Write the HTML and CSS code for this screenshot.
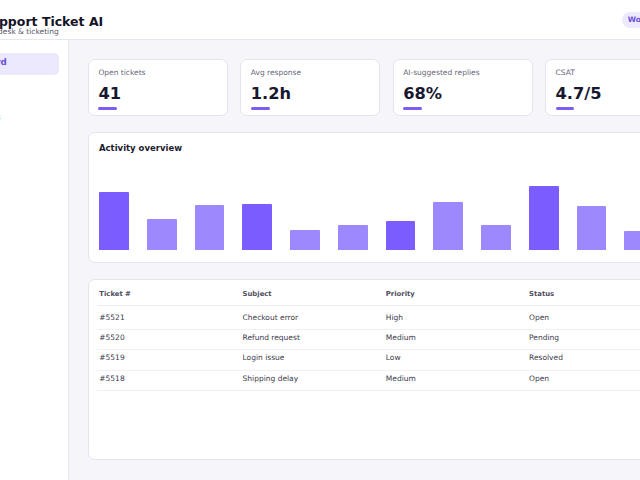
FILE: index.html
```html
<!DOCTYPE html>
<html lang="en">
<head>
<meta charset="utf-8">
<title>Support Ticket AI</title>
<link rel="stylesheet" href="styles.css">
</head>
<body>
<div class="app">
  <header class="topbar">
    <div class="brand">
      <svg class="logo" viewBox="0 0 24 24" aria-hidden="true">
        <rect width="24" height="24" rx="6" fill="#7b5cff"/>
        <path d="M6 8h12v7h-6l-3 3v-3H6z" fill="#fff"/>
      </svg>
      <div class="brand-text">
        <h1>Support Ticket AI</h1>
        <p>Helpdesk &amp; ticketing</p>
      </div>
    </div>
    <span class="badge">Workspace</span>
  </header>

  <div class="layout">
    <nav class="sidebar">
      <a class="nav-item active">Dashboard</a>
      <a class="nav-item">Tickets</a>
      <a class="nav-item">Customers</a>
      <a class="nav-item">Reports</a>
    </nav>

    <main class="main">
      <section class="stats">
        <div class="stat">
          <div class="stat-label">Open tickets</div>
          <div class="stat-value">41</div>
          <div class="stat-bar"></div>
        </div>
        <div class="stat">
          <div class="stat-label">Avg response</div>
          <div class="stat-value">1.2h</div>
          <div class="stat-bar"></div>
        </div>
        <div class="stat">
          <div class="stat-label">AI-suggested replies</div>
          <div class="stat-value">68%</div>
          <div class="stat-bar"></div>
        </div>
        <div class="stat">
          <div class="stat-label">CSAT</div>
          <div class="stat-value">4.7/5</div>
          <div class="stat-bar"></div>
        </div>
      </section>

      <section class="card chart">
        <h2>Activity overview</h2>
        <div class="bars">
          <div class="bar strong" style="height:58px"></div>
          <div class="bar" style="height:31px"></div>
          <div class="bar" style="height:45px"></div>
          <div class="bar strong" style="height:46px"></div>
          <div class="bar" style="height:20px"></div>
          <div class="bar" style="height:25px"></div>
          <div class="bar strong" style="height:29px"></div>
          <div class="bar" style="height:48px"></div>
          <div class="bar" style="height:25px"></div>
          <div class="bar strong" style="height:64px"></div>
          <div class="bar" style="height:44px"></div>
          <div class="bar" style="height:19px"></div>
        </div>
      </section>

      <section class="card table-card">
        <table class="tickets">
          <thead>
            <tr><th>Ticket #</th><th>Subject</th><th>Priority</th><th>Status</th></tr>
          </thead>
          <tbody>
            <tr><td>#5521</td><td>Checkout error</td><td>High</td><td>Open</td></tr>
            <tr><td>#5520</td><td>Refund request</td><td>Medium</td><td>Pending</td></tr>
            <tr><td>#5519</td><td>Login issue</td><td>Low</td><td>Resolved</td></tr>
            <tr><td>#5518</td><td>Shipping delay</td><td>Medium</td><td>Open</td></tr>
          </tbody>
        </table>
      </section>
    </main>
  </div>
</div>
</body>
</html>
```

FILE: styles.css
```css
* { box-sizing: border-box; }

html, body { height: 100%; }

body {
  margin: 0;
  display: flex;
  justify-content: center;
  overflow: hidden;
  background: #ffffff;
  font-family: "DejaVu Sans", "Noto Sans", sans-serif;
  color: #1b1b2f;
}

.app {
  width: 768px;
  flex-shrink: 0;
  display: flex;
  flex-direction: column;
  height: 480px;
}

/* top bar */
.topbar {
  height: 40px;
  display: flex;
  align-items: flex-start;
  justify-content: space-between;
  padding: 11.7px 24px 0 12.5px;
  border-bottom: 1px solid #e7e6ef;
  background: #fff;
}

.brand {
  display: flex;
  align-items: center;
  gap: 10px;
  margin-top: 3px;
}

.logo { width: 22.5px; height: 22.5px; display: block; }

.brand-text h1 {
  margin: 0;
  font-size: 12.5px;
  line-height: 12.5px;
  font-weight: 700;
  color: #141428;
}

.brand-text p {
  margin: 0;
  font-size: 7.5px;
  line-height: 7.5px;
  color: #55556a;
}

.badge {
  height: 16px;
  line-height: 16px;
  padding: 0 6px;
  border-radius: 999px;
  background: #ede9fe;
  color: #6a4fd8;
  font-size: 7.5px;
  font-weight: 700;
}

/* body */
.layout {
  flex: 1;
  display: flex;
  min-height: 0;
}

.sidebar {
  width: 133px;
  flex-shrink: 0;
  display: flex;
  flex-direction: column;
  gap: 5px;
  padding: 12.5px 9px;
  border-right: 1px solid #e7e6ef;
  background: #fff;
}

.nav-item {
  display: block;
  padding: 4.5px 8.4px 8px;
  line-height: 10px;
  font-size: 8.75px;
  color: #4b4b5c;
  border-radius: 5px;
}

.nav-item.active {
  background: #ece8fd;
  color: #6a4fd8;
  font-weight: 700;
}

.main {
  flex: 1;
  display: flex;
  flex-direction: column;
  gap: 16.25px;
  padding: 18.75px 19px 20px;
  background: #f5f5fa;
  min-width: 0;
}

/* stat cards */
.stats {
  display: grid;
  grid-template-columns: repeat(4, 1fr);
  gap: 12.5px;
}

.stat {
  background: #fff;
  border: 1px solid #e5e3ee;
  border-radius: 7px;
  padding: 7.5px 9.4px 5.2px;
}

.stat-label {
  font-size: 7.5px;
  line-height: 11.25px;
  color: #666677;
  margin-bottom: 5.4px;
}

.stat-value {
  font-size: 16.25px;
  line-height: 19.5px;
  font-weight: 700;
  color: #181830;
}

.stat-bar {
  width: 18.75px;
  height: 2.5px;
  margin-top: 3.9px;
  border-radius: 2px;
  background: #7b5cf5;
}

/* cards */
.card {
  background: #fff;
  border: 1px solid #e5e3ee;
  border-radius: 7px;
}

.chart {
  padding: 9.4px 12px 12.2px 10px;
}

.chart h2 {
  margin: 0;
  font-size: 8.5px;
  line-height: 10.2px;
  font-weight: 700;
  color: #1b1b2f;
}

.bars {
  height: 97px;
  display: grid;
  grid-template-columns: repeat(12, 1fr);
  align-items: end;
}

.bar {
  width: 62.8%;
  background: #9d88fd;
  border-radius: 1px 1px 0 0;
}

.bar.strong { background: #7b5cff; }

/* tickets table */
.table-card {
  flex: 1;
  padding: 4.5px 14.5px 7.5px 7.5px;
}

.tickets {
  width: 100%;
  table-layout: fixed;
  border-collapse: collapse;
}

.tickets th {
  text-align: left;
  font-size: 6.875px;
  line-height: 9px;
  font-weight: 700;
  color: #4d4d5e;
  padding: 5px 2.8px 6px;
  border-bottom: 1px solid #ebebf2;
}

.tickets td {
  font-size: 7.5px;
  line-height: 9.25px;
  color: #3a3a4a;
  padding: 3px 2.8px 7px;
  border-bottom: 1px solid #f0f0f5;
}

.tickets tbody tr:first-child td { padding-top: 7px; }
```
